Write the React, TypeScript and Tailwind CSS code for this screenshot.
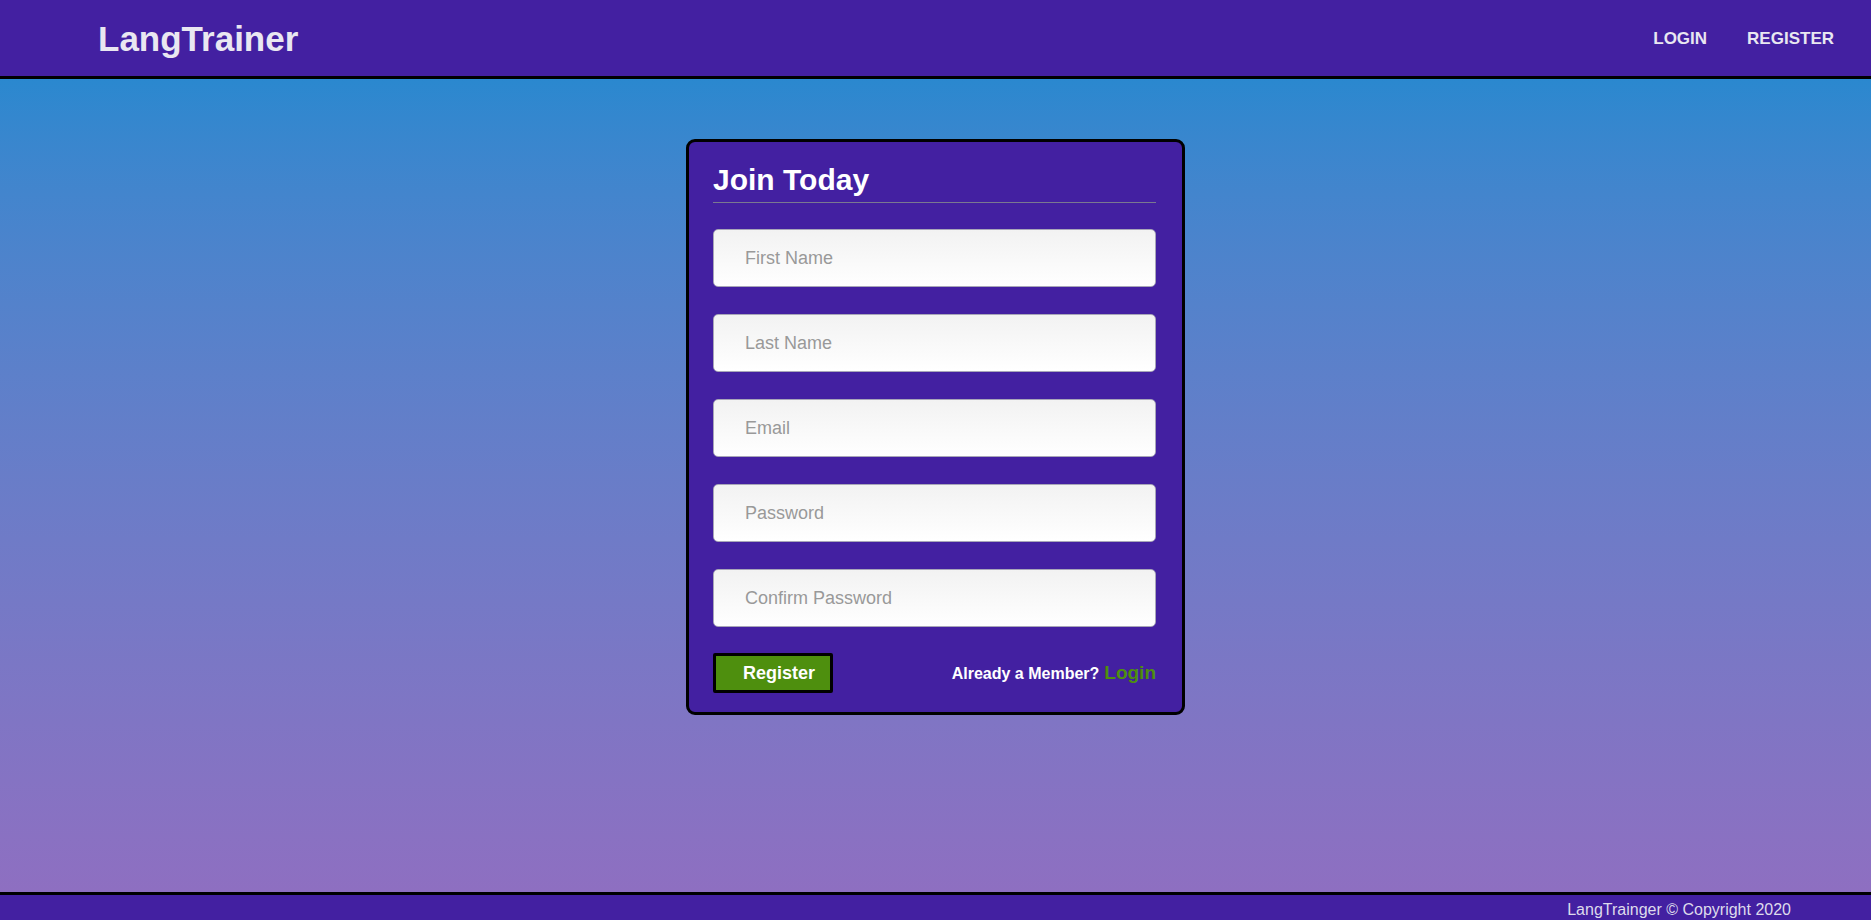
import React from "react";

const font = { fontFamily: '"Liberation Sans", Arial, sans-serif' };

function Field({ placeholder, type = "text" }: { placeholder: string; type?: string }) {
  return (
    <input
      type={type}
      placeholder={placeholder}
      className="block w-full h-[58px] rounded-[5px] border border-[#a8a6b8] bg-gradient-to-b from-[#f2f2f2] to-[#ffffff] pl-[31px] text-[18px] text-[#333] placeholder:text-[#999999] outline-none"
      style={font}
    />
  );
}

export default function App() {
  return (
    <div className="w-full min-h-screen flex flex-col" style={font}>
      <header className="h-[79px] bg-[#4320a1] border-b-[3px] border-black flex items-center justify-between pl-[98px] pr-[37px]">
        <div className="text-[35px] font-bold text-[#e9e7f1] leading-none">LangTrainer</div>
        <nav className="flex items-center gap-[40px] text-[17px] font-bold text-[#e9e7f1] pt-[2px]">
          <a>LOGIN</a>
          <a>REGISTER</a>
        </nav>
      </header>
      <main className="h-[813px] bg-gradient-to-b from-[#2a88cf] to-[#8e6fc1] flex justify-center items-start pt-[60px]">
        <div className="w-[499px] bg-[#4320a1] border-[3px] border-black rounded-[9px] pl-[24px] pr-[26px] pt-[21px] pb-[19px]">
          <h1 className="text-[30px] font-bold text-white leading-[34px]">Join Today</h1>
          <div className="h-px bg-[#7a7890] mt-[5px] mb-[26px]" />
          <div className="flex flex-col gap-[27px]">
            <Field placeholder="First Name" />
            <Field placeholder="Last Name" />
            <Field placeholder="Email" type="email" />
            <Field placeholder="Password" type="password" />
            <Field placeholder="Confirm Password" type="password" />
          </div>
          <div className="flex items-center justify-between mt-[26px]">
            <button className="w-[120px] h-[40px] bg-[#4e8f0e] border-[3px] border-black rounded-[2px] text-left pl-[27px] text-[18px] font-bold text-white">
              Register
            </button>
            <div className="flex items-baseline gap-[5px]">
              <span className="text-[16px] font-bold text-white">Already a Member?</span>
              <a className="text-[19px] font-bold text-[#4e8f0e]">Login</a>
            </div>
          </div>
        </div>
      </main>
      <footer className="bg-[#4320a1] border-t-[3px] border-black flex justify-end pr-[80px] pt-[6px] pb-[8px]">
        <span className="text-[16px] text-[#dedbec] leading-[18px]">LangTrainger © Copyright 2020</span>
      </footer>
    </div>
  );
}
